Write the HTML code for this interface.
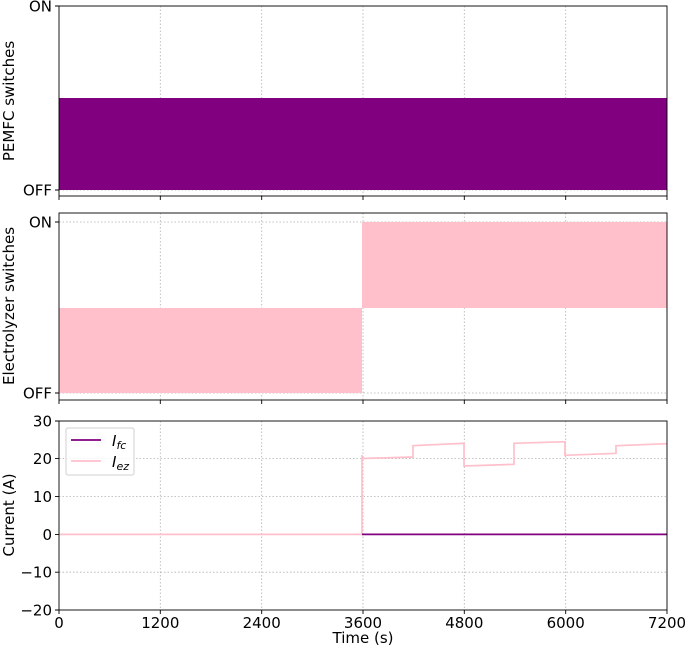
<!DOCTYPE html>
<html><head><style>body{margin:0;background:#fff}svg{display:block}text{font-family:"DejaVu Sans","Liberation Sans",sans-serif;font-size:15px;fill:#000}</style></head><body>
<svg width="685" height="646" viewBox="0 0 685 646" xmlns="http://www.w3.org/2000/svg">
<g stroke="#b0b0b0" stroke-width="0.8" stroke-dasharray="1.5,2" fill="none">
<path d="M160.3 6V196M261.7 6V196M363 6V196M464.3 6V196M565.7 6V196M59 190H667M59 6H667"/>
<path d="M160.3 213V400M261.7 213V400M363 213V400M464.3 213V400M565.7 213V400M59 393H667M59 222H667"/>
<path d="M160.3 421V610M261.7 421V610M363 421V610M464.3 421V610M565.7 421V610M59 458.6H667M59 496.6H667M59 534.4H667M59 572.2H667"/>
</g>
<rect x="59" y="98" width="608" height="92" fill="#800080"/>
<rect x="59" y="308" width="303" height="85" fill="#ffc0cb"/>
<rect x="362" y="222" width="305" height="86" fill="#ffc0cb"/>
<path d="M59 534.4H362V455V458.5L413 457V445.7L464 443.3V466L514 464.3V443.3L565 441.7V455.3L616 453.3V445.7L667 443.7" stroke="#ffc0cb" stroke-width="1.7" fill="none"/>
<path d="M362 534.4H667" stroke="#800080" stroke-width="1.7"/>
<g fill="none" stroke="#000" stroke-width="0.9">
<rect x="59" y="6" width="608" height="190"/>
<rect x="59" y="213" width="608" height="187"/>
<rect x="59" y="421" width="608" height="189"/>
<path d="M55 6H59M55 190H59M55 222H59M55 393H59M55 421H59M55 458.6H59M55 496.6H59M55 534.4H59M55 572.2H59M55 610H59"/>
<path d="M59 196V200M160.3 196V200M261.7 196V200M363 196V200M464.3 196V200M565.7 196V200M667 196V200"/>
<path d="M59 400V404M160.3 400V404M261.7 400V404M363 400V404M464.3 400V404M565.7 400V404M667 400V404"/>
<path d="M59 610V614M160.3 610V614M261.7 610V614M363 610V614M464.3 610V614M565.7 610V614M667 610V614"/>
</g>
<rect x="66" y="428" width="68" height="47" rx="2" fill="#fff" fill-opacity="0.8" stroke="#d0d0d0"/>
<path d="M71 440H101" stroke="#800080" stroke-width="1.7"/>
<path d="M71 461H101" stroke="#ffc0cb" stroke-width="1.7"/>
<text x="112" y="446" font-style="italic">I<tspan font-size="11" dy="3">fc</tspan></text>
<text x="112" y="467" font-style="italic">I<tspan font-size="11" dy="3">ez</tspan></text>
<g text-anchor="end">
<text x="52" y="11.5">ON</text><text x="52" y="195.5">OFF</text>
<text x="52" y="227.5">ON</text><text x="52" y="398.5">OFF</text>
<text x="52" y="426.5">30</text><text x="52" y="464">20</text><text x="52" y="502">10</text><text x="52" y="540">0</text><text x="52" y="577.7">−10</text><text x="52" y="615.5">−20</text>
</g>
<g text-anchor="middle">
<text x="59" y="628">0</text><text x="160.3" y="628">1200</text><text x="261.7" y="628">2400</text><text x="363" y="628">3600</text><text x="464.3" y="628">4800</text><text x="565.7" y="628">6000</text><text x="667" y="628">7200</text>
<text x="363" y="643">Time (s)</text>
<text transform="translate(14,101) rotate(-90)">PEMFC switches</text>
<text transform="translate(14,306) rotate(-90)">Electrolyzer switches</text>
<text transform="translate(14,515) rotate(-90)">Current (A)</text>
</g>
</svg>
</body></html>
